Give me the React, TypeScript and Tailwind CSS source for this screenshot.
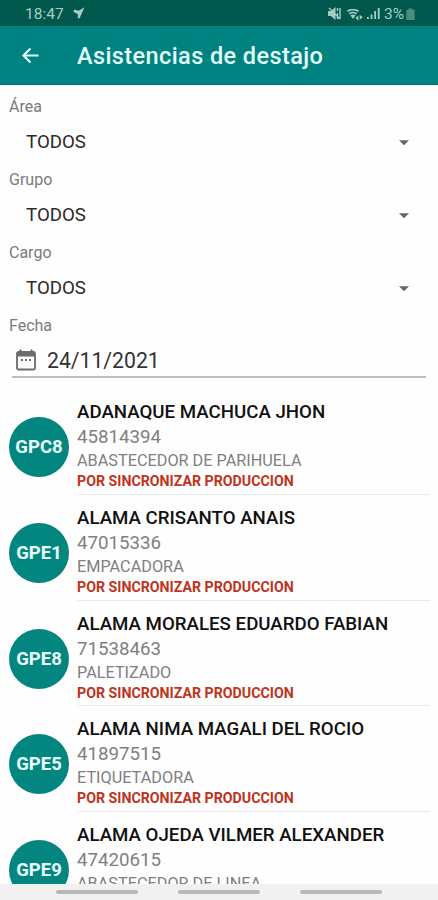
import { clsx } from "clsx";

const filters = [
  { label: "Área", value: "TODOS" },
  { label: "Grupo", value: "TODOS" },
  { label: "Cargo", value: "TODOS" },
];

const workers = [
  { group: "GPC8", name: "ADANAQUE MACHUCA JHON", dni: "45814394", job: "ABASTECEDOR DE PARIHUELA" },
  { group: "GPE1", name: "ALAMA CRISANTO ANAIS", dni: "47015336", job: "EMPACADORA" },
  { group: "GPE8", name: "ALAMA MORALES EDUARDO FABIAN", dni: "71538463", job: "PALETIZADO" },
  { group: "GPE5", name: "ALAMA NIMA MAGALI DEL ROCIO", dni: "41897515", job: "ETIQUETADORA" },
  { group: "GPE9", name: "ALAMA OJEDA VILMER ALEXANDER", dni: "47420615", job: "ABASTECEDOR DE LINEA" },
];

const StatusBar = () => (
  <div className="flex h-[26px] shrink-0 items-center bg-[#00574b] pt-[3px] pl-[25px] pr-[23px] text-[#a5cdc6]">
    <span className="w-[48px] text-[15.5px] leading-none">18:47</span>
    <svg className="-mt-[3px] h-3 w-3" viewBox="0 0 12 12" fill="currentColor">
      <path d="M11.5.2 6.5 11.5 4.7 11 5 7.2.3 4.8 1.5 2.5l4.2 1.3z" />
    </svg>
    <div className="ml-auto flex items-center">
      <svg className="-mt-[2px] h-[13px] w-[13px]" viewBox="0 0 13 13" fill="currentColor">
        <path d="M0 4h3l4.5-4v13L3 9H0z" />
        <path d="M9.5 1v3M9.5 6v6M12 1v11M1 1l11 11" stroke="currentColor" strokeWidth="1.4" fill="none" />
      </svg>
      <svg className="ml-[6px] h-[12px] w-[16px]" viewBox="0 0 16 12" fill="none" stroke="currentColor" strokeWidth="1.6">
        <path d="M.4 2.2Q6-1 11.600 2.200M2.200 4.700q3.800-2.400 7.600 0" />
        <path d="M3.400 6.300q2.600-1.500 5.200 0L6 10z" fill="currentColor" stroke="none" />
        <path d="m8.400 9 2.900-2.500v5zM12.700 5.700v5l3-2.500z" fill="currentColor" stroke="none" />
      </svg>
      <svg className="-mt-[2px] ml-[4px] h-[13px] w-[13px]" viewBox="0 0 13 13" fill="currentColor">
        <path d="M0 10h1.8v2H0zM3.6 7.5h1.8V12H3.6zM7.2 4H9v8H7.2zM10.8 1h1.8v11h-1.8z" />
      </svg>
      <span className="ml-[4px] text-[15.5px] leading-none">3%</span>
      <svg className="-mt-[2px] ml-[2px] h-[12px] w-[9px] text-[#4b8d83]" viewBox="0 0 9 13" fill="currentColor">
        <path d="M0 2h2.5V.5h4V2H9v11H0z" />
      </svg>
    </div>
  </div>
);

const Header = () => (
  <header className="flex h-[59px] shrink-0 items-center border-b border-[#026d66] bg-[#008280] pl-[21px] text-[#e2fffb]">
    <svg className="mt-px h-[17px] w-[19px]" viewBox="0 0 19 18" fill="none" stroke="currentColor" strokeWidth="2.3">
      <path d="M18 9H2M9.5 1.5 2 9l7.5 7.5" />
    </svg>
    <h1 className="ml-[37px] pt-[4px] text-[23.5px] font-medium leading-none tracking-[0.4px]">
      Asistencias de destajo
    </h1>
  </header>
);

const Filters = () => (
  <section className="h-[304px] shrink-0 pt-[11px]">
    {filters.map((filter) => (
      <div key={filter.label} className="h-[73px]">
        <div className="pl-[9px] text-[16px] leading-[22px] text-[#7b7b7b]">{filter.label}</div>
        <div className="flex h-[49px] items-center justify-between pl-[26px] pr-[29px]">
          <span className="text-[18.7px] text-[#2b2b2b]">{filter.value}</span>
          <svg className="h-[6px] w-[10px]" viewBox="0 0 11 6" fill="#666">
            <path d="M0 0h11L5.5 5.5z" />
          </svg>
        </div>
      </div>
    ))}
    <div className="pl-[9px] text-[16px] leading-[22px] text-[#7b7b7b]">Fecha</div>
    <div className="mx-[12px] mt-[8px] flex h-[33px] items-center border-b-2 border-[#bdbdbd] pl-[4px]">
      <svg className="-mt-px h-[22px] w-[20px]" viewBox="0 0 20 22" fill="none" stroke="#6b6b6b" strokeWidth="1.8">
        <rect x="1" y="3" width="18" height="17.5" rx="1.5" />
        <path d="M1 5.5h18" strokeWidth="4" />
        <path d="M4.5.5V4M15.5.5V4" strokeWidth="2" />
        <path d="M5 11h2M9 11h2M13 11h2" />
      </svg>
      <span className="ml-[11px] text-[21.2px] leading-none text-[#333]">24/11/2021</span>
    </div>
  </section>
);

const Workers = () => (
  <main className="min-h-0 flex-1 overflow-hidden">
    {workers.map((worker, index) => (
      <div key={worker.group} className="flex h-[105.75px] pl-[9px] pr-[8px]">
        <div className="mt-[28px] flex h-[60px] w-[60px] shrink-0 items-center justify-center rounded-full bg-[#048680] pt-[2px] text-[18.5px] font-bold text-[#e9fffb]">
          {worker.group}
        </div>
        <div
          className={clsx(
            "ml-[8px] flex-1 whitespace-nowrap pt-[11px]",
            index < workers.length - 1 && "border-b border-[#e9e9e9]"
          )}
        >
          <div className="text-[18.7px] font-medium leading-[25px] text-[#111]">{worker.name}</div>
          <div className="text-[18.7px] leading-[25px] text-[#808080]">{worker.dni}</div>
          <div className="text-[16.25px] leading-[21px] text-[#808080]">{worker.job}</div>
          <div className="text-[14.2px] font-bold leading-[20px] text-[#c0331c]">
            POR SINCRONIZAR PRODUCCION
          </div>
        </div>
      </div>
    ))}
  </main>
);

const NavBar = () => (
  <nav className="flex h-[16px] shrink-0 gap-[40px] bg-[#f1f1f1] pl-[56px] pt-[6px]">
    <div className="h-[4px] w-[82px] rounded-full bg-[#b8b8b8]" />
    <div className="h-[4px] w-[82px] rounded-full bg-[#b8b8b8]" />
    <div className="h-[4px] w-[82px] rounded-full bg-[#b8b8b8]" />
  </nav>
);

export default function App() {
  return (
    <div className="flex h-[900px] w-[438px] flex-col overflow-hidden bg-[#fefefe] font-['Roboto',sans-serif]">
      <StatusBar />
      <Header />
      <Filters />
      <Workers />
      <NavBar />
    </div>
  );
}
